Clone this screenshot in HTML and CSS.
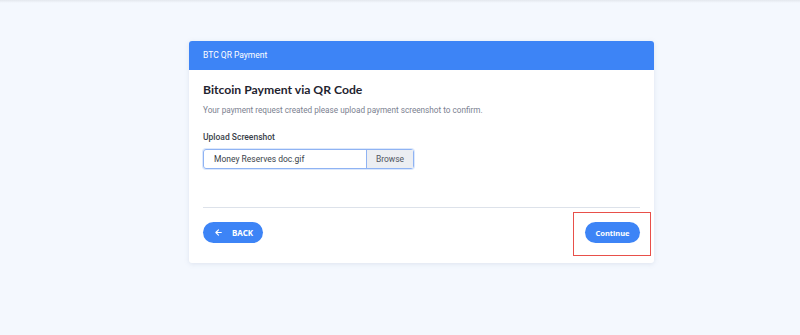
FILE: index.html
```html
<!DOCTYPE html>
<html lang="en">
<head>
    <meta charset="UTF-8">
    <meta name="viewport" content="width=device-width, initial-scale=1.0">
    <title>BTC QR Payment</title>
    <link rel="stylesheet" href="styles.css">
</head>
<body>
    <div class="topbar"></div>
    <main class="page">
        <section class="card">
            <div class="card-header">BTC QR Payment</div>
            <div class="card-body">
                <h1 class="title">Bitcoin Payment via QR Code</h1>
                <p class="lead">Your payment request created please upload payment screenshot to confirm.</p>
                <label class="label">Upload Screenshot</label>
                <div class="file-input">
                    <span class="file-name">Money Reserves doc.gif</span>
                    <span class="file-browse">Browse</span>
                </div>
                <hr class="divider">
                <div class="actions">
                    <button class="btn btn-back">
                        <svg width="7" height="7" viewBox="0 0 10 10" fill="none" stroke="white" stroke-width="1.6" stroke-linecap="round" stroke-linejoin="round">
                            <path d="M9 5H1.5M5 1.2L1.2 5L5 8.8"/>
                        </svg>
                        BACK
                    </button>
                    <div class="continue-wrap">
                        <button class="btn btn-continue">Continue</button>
                        <span class="highlight"></span>
                    </div>
                </div>
            </div>
        </section>
    </main>
</body>
</html>
```

FILE: styles.css
```css
:root{
    --blue: #3d84f6;
    --bg: #f4f8fe;
    --text-dark: #1f2430;
    --text-gray: #7b8190;
}

*{
    margin: 0px;
    padding: 0px;
    box-sizing: border-box;
}

body{
    background-color: var(--bg);
    font-family: Roboto, "Liberation Sans", sans-serif;
    height: 335px;
    overflow: hidden;
}

.topbar{
    height: 3px;
    background-image: linear-gradient(to bottom, #e4e8ee, transparent);
}

.page{
    padding-top: 38px;
    padding-left: 189px;
}

.card{
    width: 465px;
    background-color: white;
    border-radius: 3px;
    box-shadow: 0 1px 5px rgba(120, 140, 170, 0.18);
}

.card-header{
    background-color: var(--blue);
    color: white;
    font-size: 8.5px;
    height: 29px;
    line-height: 29px;
    padding: 0 14px;
    border-radius: 3px 3px 0 0;
}

.card-body{
    padding: 12px 14px 20px;
}

.title{
    font-family: Lato, sans-serif;
    font-size: 12.2px;
    line-height: 16px;
    font-weight: 700;
    color: var(--text-dark);
    margin-bottom: 6px;
}

.lead{
    font-size: 8.2px;
    line-height: 12px;
    color: var(--text-gray);
    margin-bottom: 15px;
}

.label{
    display: block;
    font-size: 8.5px;
    line-height: 12px;
    font-weight: 500;
    color: #3a3f4a;
    margin-bottom: 6px;
}

.file-input{
    display: flex;
    width: 211px;
    height: 20px;
    border: 1px solid #8fb3f3;
    border-radius: 3px;
    box-shadow: 0 0 0 1px #dce8fc;
    font-size: 8.5px;
    color: #3a3f4a;
}

.file-name{
    flex: 1;
    line-height: 18px;
    padding-left: 10px;
}

.file-browse{
    width: 47px;
    text-align: center;
    line-height: 18px;
    background-color: #eceef2;
    border-left: 1px solid #8fb3f3;
    color: #50555f;
}

.divider{
    border: none;
    border-top: 1px solid #dde2ea;
    margin-top: 38px;
    margin-bottom: 14px;
}

.actions{
    display: flex;
    justify-content: space-between;
    align-items: center;
}

.btn{
    display: flex;
    align-items: center;
    height: 21px;
    border: none;
    border-radius: 11px;
    background-color: var(--blue);
    color: white;
    font-family: "Noto Sans", sans-serif;
    font-weight: 700;
    font-size: 7.5px;
}

.btn-back{
    width: 60px;
    padding-left: 12px;
    gap: 10px;
    font-size: 8px;
}

.btn-continue{
    width: 55px;
    justify-content: center;
}

.continue-wrap{
    position: relative;
}

.highlight{
    position: absolute;
    top: -10px;
    left: -12px;
    right: -11px;
    bottom: -13px;
    border: 1px solid #e8504a;
}
```
